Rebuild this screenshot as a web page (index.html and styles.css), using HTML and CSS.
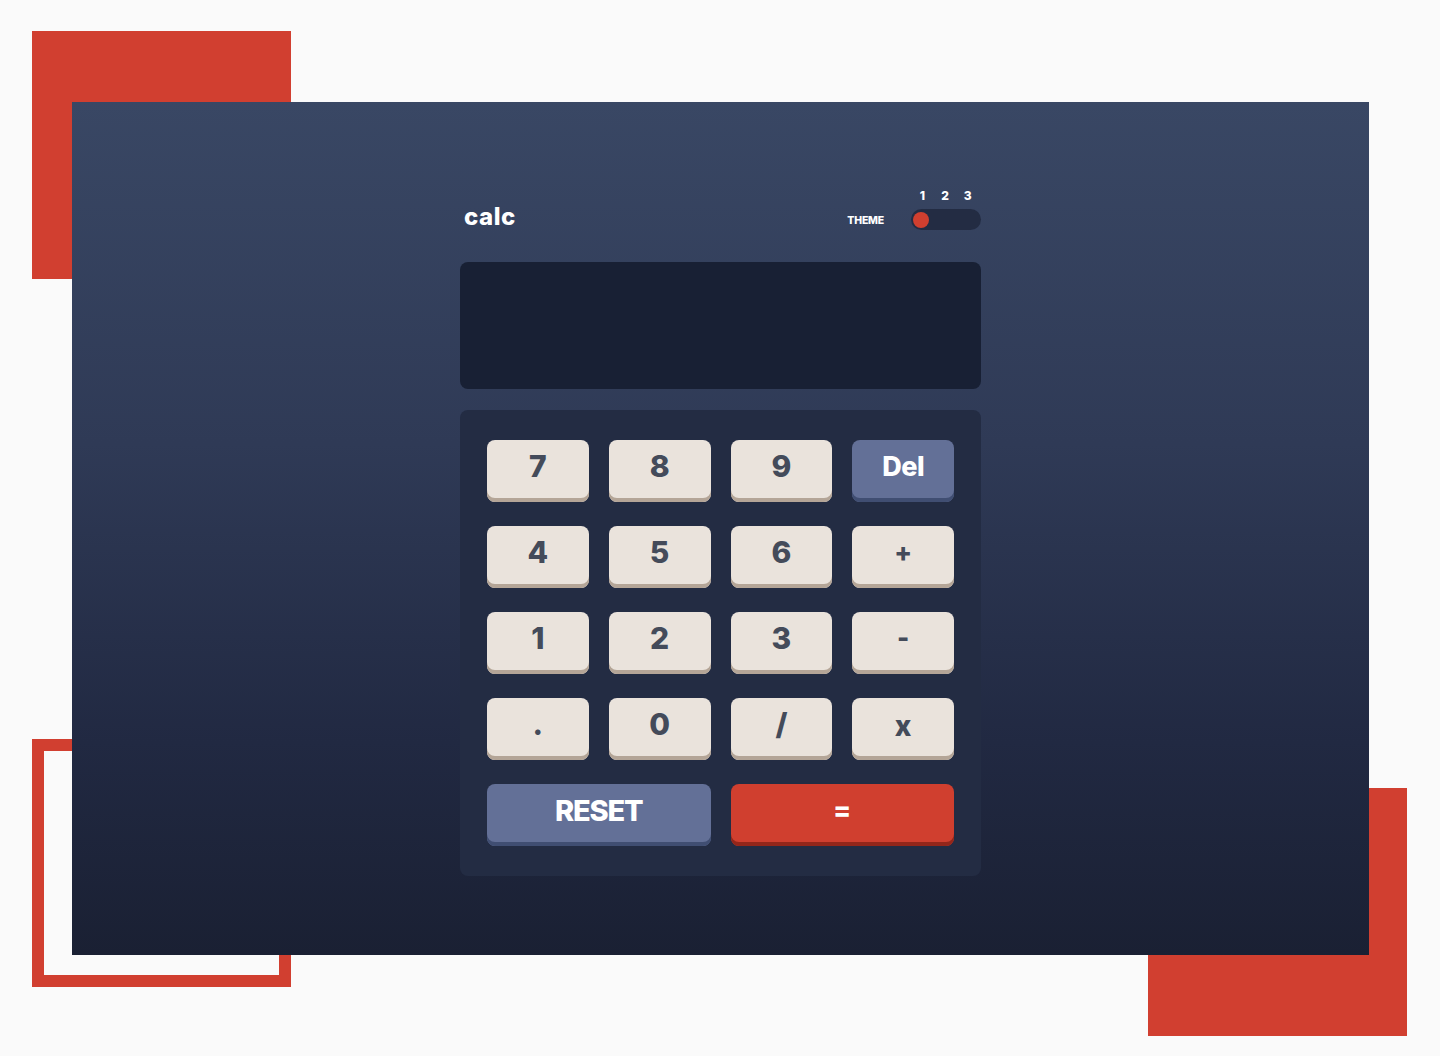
FILE: index.html
```html
<!DOCTYPE html>
<html lang="en">
<head>
<meta charset="utf-8">
<title>calc</title>
<link rel="stylesheet" href="styles.css">
</head>
<body>
<div class="stage">
  <div class="deco deco-tl"></div>
  <div class="deco deco-bl"></div>
  <div class="deco deco-br"></div>
  <main class="panel">
    <div class="calc">
      <header class="header">
        <h1 class="logo">calc</h1>
        <div class="theme">
          <span class="theme-label">THEME</span>
          <div class="switch">
            <div class="nums"><span>1</span><span>2</span><span>3</span></div>
            <div class="track"><span class="knob"></span></div>
          </div>
        </div>
      </header>
      <div class="screen"></div>
      <div class="keypad">
        <button class="key">7</button>
        <button class="key">8</button>
        <button class="key">9</button>
        <button class="key key-blue key-word">Del</button>
        <button class="key">4</button>
        <button class="key">5</button>
        <button class="key">6</button>
        <button class="key key-op">+</button>
        <button class="key">1</button>
        <button class="key">2</button>
        <button class="key">3</button>
        <button class="key key-op">-</button>
        <button class="key">.</button>
        <button class="key">0</button>
        <button class="key">/</button>
        <button class="key key-x">x</button>
        <button class="key key-blue key-word key-wide">RESET</button>
        <button class="key key-red key-wide key-eq">=</button>
      </div>
    </div>
  </main>
</div>
</body>
</html>
```
FILE: styles.css
```css
* { box-sizing: border-box; }

html, body {
  margin: 0;
  padding: 0;
  background: #fafafa;
}

body {
  font-family: "Inter", "Lato", "Liberation Sans", sans-serif;
}

.stage {
  position: relative;
  width: 1440px;
  height: 1056px;
  padding: 102px 0 0 72px;
  overflow: hidden;
}

.deco {
  position: absolute;
  z-index: 0;
}

.deco-tl {
  left: 32px;
  top: 31px;
  width: 259px;
  height: 248px;
  background: #d13f30;
}

.deco-bl {
  left: 32px;
  top: 739px;
  width: 259px;
  height: 248px;
  border: 12px solid #d13f30;
}

.deco-br {
  left: 1148px;
  top: 788px;
  width: 259px;
  height: 248px;
  background: #d13f30;
}

.panel {
  position: relative;
  z-index: 1;
  width: 1297px;
  height: 853px;
  background: linear-gradient(to bottom, #394764 0%, #2f3a56 40%, #212942 75%, #1a2033 100%);
  padding-top: 88px;
}

.calc {
  width: 521px;
  margin: 0 auto;
}

.header {
  height: 40px;
  display: flex;
  justify-content: space-between;
  align-items: flex-end;
  padding-left: 4px;
}

.logo {
  margin: 0 0 1px 0;
  font-size: 24px;
  line-height: 24px;
  font-weight: 800;
  color: #ffffff;
  letter-spacing: 0.5px;
}

.theme {
  display: flex;
  align-items: flex-end;
  gap: 27px;
}

.theme-label {
  font-size: 10.5px;
  line-height: 21px;
  font-weight: 800;
  color: #ffffff;
  letter-spacing: -0.2px;
  margin-bottom: -1px;
}

.switch {
  width: 70px;
  display: flex;
  flex-direction: column;
  gap: 7px;
}

.nums {
  display: grid;
  grid-template-columns: repeat(3, 1fr);
  font-size: 12px;
  line-height: 12px;
  font-weight: 800;
  color: #ffffff;
  text-align: center;
  padding-right: 2px;
}

.track {
  height: 21px;
  border-radius: 11px;
  background: #232c43;
  padding: 2.5px 2px;
  display: flex;
  align-items: center;
}

.knob {
  width: 16px;
  height: 16px;
  border-radius: 50%;
  background: #d03f2f;
}

.screen {
  margin-top: 32px;
  height: 127px;
  border-radius: 8px;
  background: #182034;
}

.keypad {
  margin-top: 21px;
  height: 466px;
  border-radius: 8px;
  background: #232c43;
  padding: 30px 27px;
  display: grid;
  grid-template-columns: repeat(4, 1fr);
  grid-auto-rows: 62px;
  column-gap: 20px;
  row-gap: 24px;
}

.key {
  border: 0;
  margin: 0;
  border-radius: 8px;
  background: #eae3dc;
  box-shadow: inset 0 -4px 0 #b4a597;
  color: #444b5a;
  font-family: inherit;
  font-size: 30px;
  font-weight: 800;
  line-height: 1;
  display: flex;
  align-items: center;
  justify-content: center;
  padding: 0 0 10px 0;
}

.key-op {
  font-size: 26px;
}

.key-x {
  font-size: 28px;
  padding-bottom: 6px;
}

.key-blue {
  background: #637097;
  box-shadow: inset 0 -4px 0 #404e72;
  color: #ffffff;
}

.key-red {
  background: #d03f2f;
  box-shadow: inset 0 -4px 0 #93261a;
  color: #ffffff;
}

.key-word {
  font-size: 27px;
  letter-spacing: -0.5px;
}

.key-wide {
  grid-column: span 2;
}

.key-wide.key-word {
  font-size: 29px;
  letter-spacing: -1.2px;
}

.key-eq {
  font-size: 26px;
  font-weight: 800;
}
```
